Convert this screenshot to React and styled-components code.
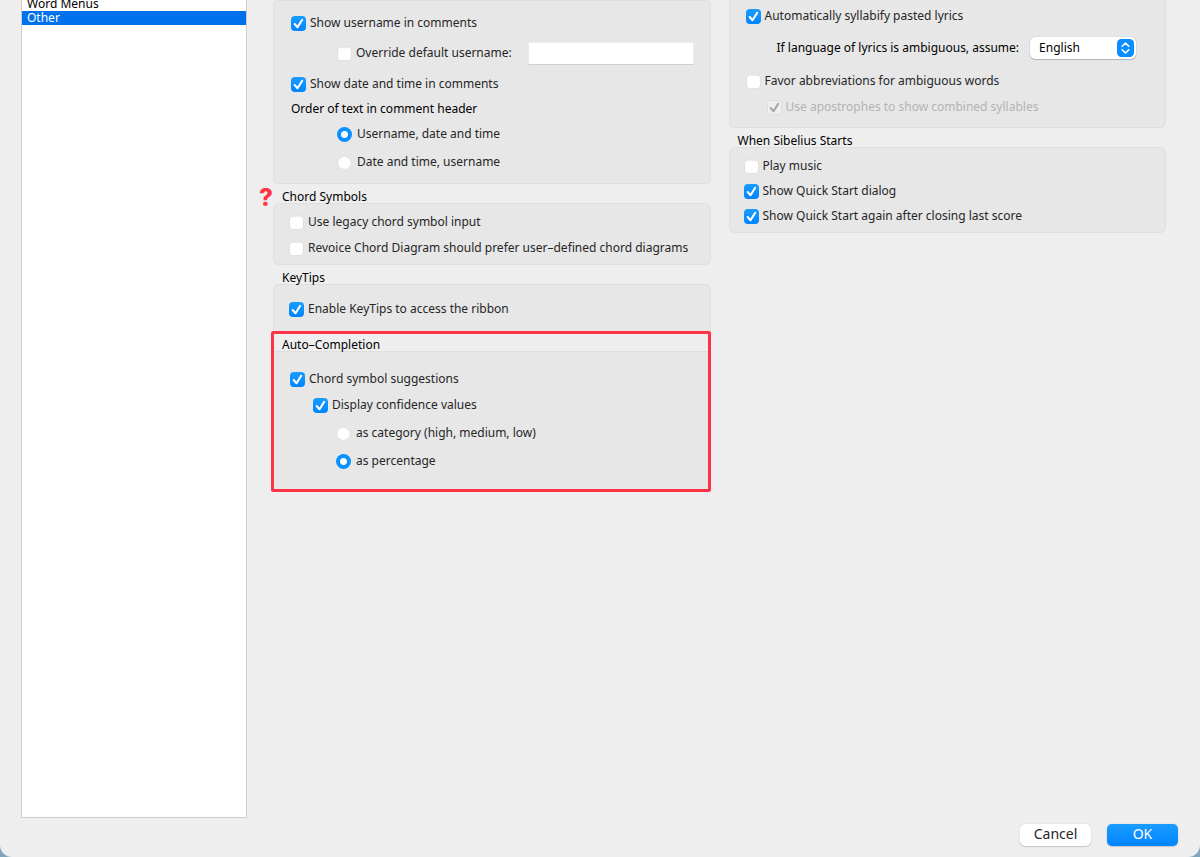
import React, { useState } from "react";
import styled, { createGlobalStyle } from "styled-components";

const GlobalStyle = createGlobalStyle`
    * {
        box-sizing: border-box;
    }

    body {
        margin: 0;
        background-color: #7fa6bb;
        font-family: 'Noto Sans', 'Open Sans', sans-serif;
        font-size: 12px;
        line-height: 14px;
        color: #000;
    }
`

const Window = styled.div`
    display: flex;
    flex-direction: column;
    min-height: 100vh;
    background-color: #eee;
    border-radius: 0 0 12px 12px;
    overflow: hidden;
`

const Main = styled.div`
    flex: 1;
    display: flex;
    gap: 26px;
    padding: 0 34px 0 21px;
`

const Sidebar = styled.div`
    flex: none;
    width: 226px;
    background-color: #fff;
    border: 1px solid #cdcdcd;
    border-top: none;
    overflow: hidden;
`

const PageList = styled.ul`
    list-style: none;
    margin: -3px 0 0;
    padding: 0;
`

const PageItem = styled.li`
    height: 14px;
    padding: 0 5px;
    background-color: ${props => props.$active ? '#0071ec' : 'transparent'};
    color: ${props => props.$active ? '#fff' : '#000'};
    cursor: default;
`

const Columns = styled.div`
    flex: 1;
    display: grid;
    grid-template-columns: 1fr 1fr;
    gap: 18px;
    align-items: start;
`

const Column = styled.div`
    min-width: 0;
`

const Title = styled.h2`
    position: relative;
    margin: 0;
    padding: ${props => props.$compact ? '4px 8px 0' : '6px 9px 0'};
    font-size: 12px;
    line-height: 13px;
    font-weight: 400;
`

const Panel = styled.div`
    padding: ${props => props.$pad};
    background-color: #e7e7e7;
    border: 1px solid #dfdfdf;
    border-radius: 6px;
`

const TopPanel = styled(Panel)`
    border-top: none;
    border-radius: 0 0 6px 6px;
`

const CutPanel = styled(Panel)`
    border-bottom: none;
    border-radius: 6px 6px 0 0;
`

const FlatPanel = styled(Panel)`
    border-width: 1px 0 0;
    border-radius: 0;
`

const Highlight = styled.section`
    margin-left: -2px;
    border: 3px solid #fc3445;
    border-radius: 2px;
`

const HelpMark = styled.span`
    position: absolute;
    left: -14px;
    top: 2px;
    color: #fc3445;
    font-family: Inter, sans-serif;
    font-size: 24px;
    line-height: 24px;
    font-weight: 800;
`

const Row = styled.div`
    display: flex;
    align-items: center;
    height: ${props => props.$h || 26}px;
    padding-left: ${props => props.$indent || 0}px;
`

const Label = styled.label`
    display: flex;
    align-items: center;
    gap: ${props => props.$gap || 4}px;
    color: ${props => props.$disabled ? '#b3b3b3' : '#262626'};
    white-space: nowrap;
`

const Plain = styled.label`
    color: #000;
    white-space: nowrap;
`

const check = color => `url("data:image/svg+xml,%3Csvg xmlns='http://www.w3.org/2000/svg' viewBox='0 0 15 15'%3E%3Cpath d='M3.7 8l2.8 3.2 4.7-7.4' fill='none' stroke='%23${color}' stroke-width='2.1' stroke-linecap='round' stroke-linejoin='round'/%3E%3C/svg%3E")`

const Box = styled.input`
    appearance: none;
    flex: none;
    width: 15px;
    height: 15px;
    margin: 0;
    border-radius: 4px;
    background-color: #fff;
    box-shadow: inset 0 0 0 1px #e0e0e0, inset 0 1px 1px 1px #ececec;

    &:checked {
        background: ${check('fff')}, linear-gradient(#1a9dff, #0084ff);
        box-shadow: none;
    }

    &:checked:disabled {
        background: ${check('a6a6a6')}, #efefef;
        box-shadow: inset 0 0 0 1px #dedede;
    }
`

const Dot = styled.input`
    appearance: none;
    flex: none;
    width: 15px;
    height: 15px;
    margin: 0;
    border-radius: 50%;
    background-color: #fff;
    box-shadow: inset 0 0 0 1px #e0e0e0, inset 0 1px 1px 1px #ececec;

    &:checked {
        background: radial-gradient(circle, #fff 3px, #0a91ff 4px);
        box-shadow: none;
    }
`

const TextField = styled.input`
    width: 166px;
    height: 23px;
    margin-left: auto;
    margin-right: 16px;
    padding: 0 6px;
    border: 1px solid #ececec;
    border-bottom-color: #d0d0d0;
    background-color: #fff;
    font: inherit;
`

const SelectWrap = styled.div`
    position: relative;
    margin-left: 11px;
`

const Select = styled.select`
    appearance: none;
    display: block;
    width: 106px;
    height: 22px;
    padding: 0 24px 0 9px;
    border: none;
    border-radius: 5px;
    background-color: #fff;
    box-shadow: 0 0 1px rgba(0, 0, 0, 0.3), 0 1px 1px rgba(0, 0, 0, 0.2);
    color: #000;
    font: inherit;
`

const Arrows = styled.svg`
    position: absolute;
    right: 2px;
    top: 2px;
    width: 17px;
    height: 18px;
    pointer-events: none;
`

const Footer = styled.div`
    display: flex;
    justify-content: flex-end;
    gap: 16px;
    padding: 6px 22px 11px;
`

const Button = styled.button`
    width: 71px;
    height: 22px;
    padding: 0 0 2px;
    border: none;
    border-radius: 5px;
    background: ${props => props.$primary ? 'linear-gradient(#1a9dff, #0084ff)' : '#fff'};
    color: ${props => props.$primary ? '#fff' : '#262626'};
    box-shadow: 0 0 1px rgba(0, 0, 0, 0.25), 0 1px 1px rgba(0, 0, 0, 0.15);
    font-family: inherit;
    font-size: 14px;
    line-height: 20px;
`

const Check = ({ children, on, disabled }) => (
    <Label $disabled={disabled}>
        <Box type="checkbox" defaultChecked={on} disabled={disabled} />
        {children}
    </Label>
)

const Radio = ({ children, name, on }) => (
    <Label $gap={5}>
        <Dot type="radio" name={name} defaultChecked={on} />
        {children}
    </Label>
)

const pages = ['Word Menus', 'Other']

const App = () => {
    const [page, setPage] = useState('Other')

    return (
        <>
            <GlobalStyle />
            <Window>
                <Main>
                    <Sidebar>
                        <PageList role="listbox" aria-label="Preferences">
                            {pages.map(name => (
                                <PageItem
                                    key={name}
                                    role="option"
                                    aria-selected={page === name}
                                    $active={page === name}
                                    onClick={() => setPage(name)}
                                >
                                    {name}
                                </PageItem>
                            ))}
                        </PageList>
                    </Sidebar>

                    <Columns>
                        <Column>
                            <Panel $pad="8px 0 8px 17px">
                                <Row $h={28}><Check on>Show username in comments</Check></Row>
                                <Row $h={32} $indent={46}>
                                    <Check>Override default username:</Check>
                                    <TextField type="text" aria-label="Default username" />
                                </Row>
                                <Row $h={30}><Check on>Show date and time in comments</Check></Row>
                                <Row $h={20}>Order of text in comment header</Row>
                                <Row $h={30} $indent={46}><Radio name="order" on>Username, date and time</Radio></Row>
                                <Row $indent={46}><Radio name="order">Date and time, username</Radio></Row>
                            </Panel>

                            <Title>
                                <HelpMark aria-hidden="true">?</HelpMark>
                                Chord Symbols
                            </Title>
                            <Panel $pad="5px 0 3px 15px">
                                <Row><Check>Use legacy chord symbol input</Check></Row>
                                <Row><Check>Revoice Chord Diagram should prefer user–defined chord diagrams</Check></Row>
                            </Panel>

                            <Title>KeyTips</Title>
                            <CutPanel $pad="11px 0 9px 15px">
                                <Row><Check on>Enable KeyTips to access the ribbon</Check></Row>
                            </CutPanel>

                            <Highlight>
                                <Title $compact>Auto–Completion</Title>
                                <FlatPanel $pad="14px 0 15px 16px">
                                    <Row><Check on>Chord symbol suggestions</Check></Row>
                                    <Row $indent={23}><Check on>Display confidence values</Check></Row>
                                    <Row $h={30} $indent={46}><Radio name="confidence">as category (high, medium, low)</Radio></Row>
                                    <Row $indent={46}><Radio name="confidence" on>as percentage</Radio></Row>
                                </FlatPanel>
                            </Highlight>
                        </Column>

                        <Column>
                            <TopPanel $pad="3px 0 8px 16px">
                                <Row><Check on>Automatically syllabify pasted lyrics</Check></Row>
                                <Row $h={38} $indent={31}>
                                    <Plain htmlFor="language">If language of lyrics is ambiguous, assume:</Plain>
                                    <SelectWrap>
                                        <Select id="language" defaultValue="English">
                                            <option>English</option>
                                            <option>German</option>
                                            <option>Italian</option>
                                        </Select>
                                        <Arrows viewBox="0 0 17 18">
                                            <rect width="17" height="18" rx="4.5" fill="#0a8dff" />
                                            <path
                                                d="M5.2 7.2L8.5 4l3.3 3.2M5.2 10.8L8.5 14l3.3-3.2"
                                                fill="none"
                                                stroke="#fff"
                                                strokeWidth="1.6"
                                                strokeLinecap="round"
                                                strokeLinejoin="round"
                                            />
                                        </Arrows>
                                    </SelectWrap>
                                </Row>
                                <Row $h={28}><Check>Favor abbreviations for ambiguous words</Check></Row>
                                <Row $h={24} $indent={21}><Check on disabled>Use apostrophes to show combined syllables</Check></Row>
                            </TopPanel>

                            <Title>When Sibelius Starts</Title>
                            <Panel $pad="5px 0 3px 14px">
                                <Row><Check>Play music</Check></Row>
                                <Row $h={24}><Check on>Show Quick Start dialog</Check></Row>
                                <Row><Check on>Show Quick Start again after closing last score</Check></Row>
                            </Panel>
                        </Column>
                    </Columns>
                </Main>

                <Footer>
                    <Button type="button">Cancel</Button>
                    <Button type="button" $primary>OK</Button>
                </Footer>
            </Window>
        </>
    )
}

export default App
